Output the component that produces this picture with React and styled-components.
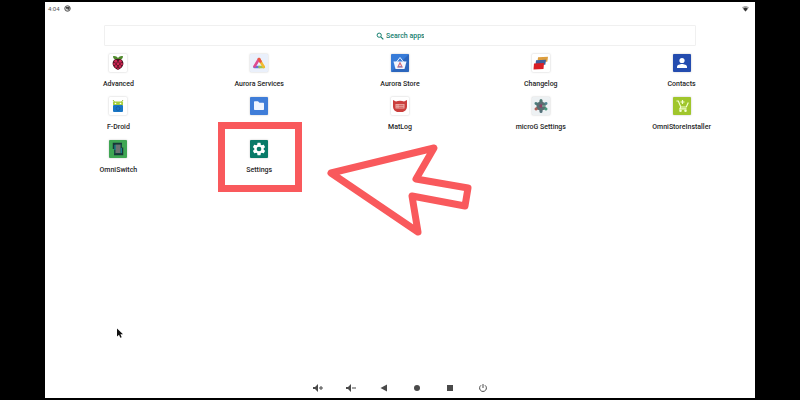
import React from "react";
import styled, { createGlobalStyle } from "styled-components";

const GlobalStyle = createGlobalStyle`
  * { box-sizing: border-box; }
  body { margin: 0; background: #000; font-family: Roboto, "Liberation Sans", sans-serif; }
  button, input { font: inherit; color: inherit; border: 0; padding: 0; background: none; }
`;

const Stage = styled.div`
  display: flex;
  min-height: 100vh;
  padding: 2px 45px;
  background: #000;
`;

const Screen = styled.main`
  position: relative;
  flex: 1;
  display: flex;
  flex-direction: column;
  background: #fff;
  color: #262626;
`;

const StatusBar = styled.header`
  display: flex;
  align-items: center;
  justify-content: space-between;
  height: 12px;
  padding: 0 6px 0 3px;
  font-size: 6px;
  color: #555;
`;

const StatusGroup = styled.div`
  display: flex;
  align-items: center;
  gap: 4px;
`;

const SearchBar = styled.label`
  display: flex;
  align-items: center;
  justify-content: center;
  gap: 2px;
  height: 21px;
  margin: 11px 59px 0;
  border: 1px solid #f0f0f0;
  border-radius: 1px;
  color: #16806f;
  font-size: 7px;
  font-weight: 500;
`;

const SearchInput = styled.input`
  width: 38px;
  height: 10px;
  outline: 0;
  line-height: 10px;
  &::placeholder { color: #16806f; opacity: 1; }
`;

const AppGrid = styled.section`
  display: grid;
  grid-template-columns: repeat(5, 1fr);
  row-gap: 8px;
  padding: 8px 3px 0;
`;

const AppCell = styled.div`
  position: relative;
  display: flex;
  justify-content: center;
`;

const AppButton = styled.button`
  display: flex;
  flex-direction: column;
  align-items: center;
  height: 35px;
  gap: 7px;
  font-size: 7px;
  font-weight: 500;
  line-height: 10px;
  white-space: nowrap;
`;

const AppIcon = styled.svg`
  display: block;
  width: 18px;
  height: 18px;
  flex: none;
  border-radius: 1px;
  background: ${(p) => p.$bg || "#fff"};
  box-shadow: 0 0 2px rgba(0, 0, 0, 0.25);
`;

const Highlight = styled.div`
  position: absolute;
  top: -18px;
  left: 50%;
  width: 84px;
  height: 70px;
  margin-left: -41px;
  border: 7px solid #f9595c;
  pointer-events: none;
`;

const Arrow = styled.svg`
  position: absolute;
  top: 3px;
  left: 50%;
  width: 150px;
  height: 94px;
  margin-left: 66px;
  pointer-events: none;
`;

const Pointer = styled.svg`
  position: absolute;
  left: 71px;
  top: 326px;
  width: 8px;
  height: 11px;
`;

const NavBar = styled.nav`
  display: flex;
  justify-content: center;
  margin-top: auto;
  padding-bottom: 4px;
  color: #4a4a4a;
`;

const NavButton = styled.button`
  display: flex;
  align-items: center;
  justify-content: center;
  width: 33px;
  height: 12px;
`;

const Glyph = styled.svg`
  display: block;
  width: ${(p) => p.$size}px;
  height: ${(p) => p.$size}px;
`;

const GEAR =
  "M19.14 12.94c.04-.3.06-.61.06-.94s-.02-.64-.07-.94l2.03-1.58a.5.5 0 0 0 .12-.61l-1.92-3.32a.5.5 0 0 0-.59-.22l-2.39.96a7 7 0 0 0-1.62-.94l-.36-2.54a.5.5 0 0 0-.48-.41h-3.84a.5.5 0 0 0-.47.41l-.36 2.54c-.59.24-1.13.57-1.62.94l-2.39-.96a.5.5 0 0 0-.59.22L2.74 8.87a.5.5 0 0 0 .12.61l2.03 1.58a6 6 0 0 0 0 1.88l-2.03 1.58a.5.5 0 0 0-.12.61l1.92 3.32c.12.22.37.29.59.22l2.39-.96c.5.38 1.03.7 1.62.94l.36 2.54c.05.24.24.41.48.41h3.84c.24 0 .44-.17.47-.41l.36-2.54a7 7 0 0 0 1.62-.94l2.39.96c.22.08.47 0 .59-.22l1.92-3.32a.5.5 0 0 0-.12-.61zM12 15.6a3.6 3.6 0 1 1 0-7.2 3.6 3.6 0 0 1 0 7.2z";

const Raspberry = () => (
  <>
    <path d="M4 2.2C6 1.700 8 2.500 9 4c1-1.500 3-2.300 5-1.800 0 2.500-1.800 3.800-5 3.800S4 4.700 4 2.200z" fill="#4f8a2c" />
    <path d="M9 5c3.300-.6 5.400 1.500 5.400 4.200 0 3.500-2.700 5.500-5.400 6.600-2.700-1.100-5.400-3.100-5.400-6.600C3.600 6.500 5.700 4.400 9 5z" fill="#4a1220" />
    <g fill="#cf2452">
      <circle cx="6.800" cy="7.200" r="1.500" /><circle cx="11.200" cy="7.200" r="1.500" />
      <circle cx="9" cy="9.700" r="1.500" /><circle cx="5.400" cy="10" r="1.200" />
      <circle cx="12.600" cy="10" r="1.200" /><circle cx="7" cy="12.400" r="1.300" />
      <circle cx="11" cy="12.400" r="1.300" /><circle cx="9" cy="14.500" r=".9" />
    </g>
  </>
);

const AuroraServices = () => (
  <g fill="none" strokeWidth="2.600" strokeLinejoin="round" strokeLinecap="round">
    <path d="M4.500 13h5" stroke="#6076dc" />
    <path d="M9.500 13h4.300" stroke="#9cc652" />
    <path d="M9 5l4.800 8" stroke="#f2ba32" />
    <path d="M9 5L4.500 12.500" stroke="#df4b91" />
    <path d="M9 5l1.500 2.500" stroke="#e95744" />
  </g>
);

const AuroraStore = () => (
  <>
    <path d="M0 18L18 0v18z" fill="#2455a8" opacity=".55" />
    <path d="M5.500 8L9 3.500 12.500 8" fill="none" stroke="#e8f2ff" strokeWidth="1" />
    <path d="M2.500 7.500h13l-2 7.500h-9z" fill="#f2f7ff" />
    <path d="M9 8.800l-2 4h4z" fill="none" stroke="#d96a72" strokeWidth="1.200" />
    <path d="M7 12.800h4" stroke="#777fc4" strokeWidth="1" />
  </>
);

const Changelog = () => (
  <>
    <path d="M6 3.200l10-.5-.7 5H5.500z" fill="#dd9e3e" />
    <path d="M4 6.200l10-.5-.7 5H3.500z" fill="#3d5d9b" />
    <path d="M2 9.500l10-.5-.5 6-10 .4z" fill="#d91e25" />
  </>
);

const Contacts = () => (
  <g fill="#fff">
    <circle cx="9" cy="6.500" r="2.600" />
    <path d="M4 14v-1c0-2 3-2.900 5-2.900s5 .9 5 2.900v1z" />
  </g>
);

const FDroid = () => (
  <>
    <path d="M4 3l1.500 2M14 3l-1.500 2" stroke="#9abf36" strokeWidth="1" />
    <rect x="4" y="4.500" width="10" height="4" rx="1" fill="#a6cf3b" />
    <circle cx="6.500" cy="6.500" r=".8" fill="#fff" /><circle cx="11.500" cy="6.500" r=".8" fill="#fff" />
    <rect x="4" y="8" width="10" height="7" rx="1" fill="#1976c5" />
    <circle cx="9" cy="11.500" r="1.900" fill="none" stroke="#155ca1" strokeWidth=".8" />
  </>
);

const Folder = () => (
  <path d="M4 5.200c0-.7.400-1 1-1h3L9.500 5.700H13c.7 0 1 .4 1 1V12c0 .7-.3 1-1 1H5c-.6 0-1-.3-1-1z" fill="#f1f6ff" />
);

const MatLog = () => (
  <>
    <path d="M2 3l3 1.400c2.300-1 5.700-1 8 0L16 3v6.500c0 3-2.500 5.500-5 5.500H7c-2.500 0-5-2.500-5-5.500z" fill="#cb3f3c" />
    <rect x="4.500" y="7" width="9" height="4.500" fill="#eeb0aa" />
    <path d="M5.500 8.300h1M7.500 8.300h5M5.500 10.200h1M7.500 10.200h5" stroke="#c6413d" strokeWidth=".8" />
  </>
);

const MicroG = () => (
  <>
    <g strokeWidth="3" strokeLinecap="round">
      <path d="M9 3.500V9" stroke="#48776f" /><path d="M9 9l5-2.500" stroke="#4f8690" />
      <path d="M9 9l5 3" stroke="#44997b" /><path d="M9 9v5.500" stroke="#53717a" />
      <path d="M9 9l-5 3" stroke="#af6159" /><path d="M9 9L4 6.500" stroke="#4b7c7c" />
    </g>
    <circle cx="9" cy="9" r="4.500" fill="#586f72" />
    <circle cx="9" cy="9" r="1.700" fill="#8d3f63" />
    <path d="M10 9h3" stroke="#81c7a4" strokeWidth="1" />
  </>
);

const Cart = () => (
  <g fill="none" stroke="#f2ffd0" strokeWidth="1.200">
    <path d="M3.500 4h1.800l2.500 6h5.500l2-4.500M7.800 10l-1 1.800h6.700M9.500 3v4M7.500 5h4" />
    <circle cx="7.500" cy="13.800" r=".7" fill="#fff" /><circle cx="12.500" cy="13.800" r=".7" fill="#fff" />
  </g>
);

const OmniSwitch = () => (
  <>
    <path d="M5 3h8v12H5z" fill="#174b43" />
    <path d="M6.500 4.500h5v8.500h-5z" fill="#6d7172" />
    <path d="M4.500 9V3.500H13M13.500 7.500v7H5" fill="none" stroke="#183638" strokeWidth="1.500" />
    <path d="M6 5v5M12.300 8v5" stroke="#168f9e" strokeWidth="1" />
  </>
);

const Settings = () => (
  <g transform="translate(1.2 1.2) scale(.65)">
    <path d={GEAR} fill="#fff" />
  </g>
);

const apps = [
  { name: "Advanced", Art: Raspberry },
  { name: "Aurora Services", Art: AuroraServices, bg: "#eaf0fb" },
  { name: "Aurora Store", Art: AuroraStore, bg: "#377bd8" },
  { name: "Changelog", Art: Changelog },
  { name: "Contacts", Art: Contacts, bg: "#244caf" },
  { name: "F-Droid", Art: FDroid },
  { name: "Files", Art: Folder, bg: "#3f7dd8", unlabelled: true },
  { name: "MatLog", Art: MatLog },
  { name: "microG Settings", Art: MicroG, bg: "#edf1f3" },
  { name: "OmniStoreInstaller", Art: Cart, bg: "#a0c62c" },
  { name: "OmniSwitch", Art: OmniSwitch, bg: "#3fa653" },
  { name: "Settings", Art: Settings, bg: "#087a68", marked: true },
];

const SPEAKER = "M0 4h2l3-3v8L2 6H0z";

const navItems = [
  { name: "Volume up", art: <path d={`${SPEAKER}M6 4.500h4v1H6zM7.500 3h1v4h-1z`} /> },
  { name: "Volume down", art: <path d={`${SPEAKER}M6 4.500h4v1H6z`} /> },
  { name: "Back", art: <path d="M1.500 5L8 1.500v7z" /> },
  { name: "Home", art: <circle cx="5" cy="5" r="3" /> },
  { name: "Recent apps", art: <path d="M2 2h6v6H2z" /> },
  {
    name: "Power",
    art: <path d="M5 1v4M3 2.300a3.400 3.400 0 1 0 4 0" fill="none" stroke="currentColor" strokeWidth="1" />,
  },
];

export default function App() {
  return (
    <Stage>
      <GlobalStyle />
      <Screen>
        <StatusBar>
          <StatusGroup>
            <span>4:04</span>
            <Glyph $size={7} viewBox="0 0 14 14" aria-hidden="true">
              <circle cx="7" cy="7" r="5.500" fill="#ddd" stroke="#555" strokeWidth="2" />
              <path d="M4 4h7v3.500L7.500 11V7.500H4z" fill="#444" />
            </Glyph>
          </StatusGroup>
          <Glyph $size={7} viewBox="0 0 14 14" aria-label="Wi-Fi">
            <path d="M0 5c4-4 10-4 14 0l-7 8z" fill="#aaa" />
            <path d="M2.500 7.500c3-2.500 6-2.500 9 0L7 13z" fill="#333" />
          </Glyph>
        </StatusBar>

        <SearchBar>
          <Glyph $size={8} viewBox="0 0 8 8" aria-hidden="true">
            <circle cx="3.200" cy="3.200" r="2.100" fill="none" stroke="currentColor" strokeWidth="1" />
            <path d="M4.800 4.800l2.500 2.500" stroke="currentColor" strokeWidth="1.200" />
          </Glyph>
          <SearchInput type="text" placeholder="Search apps" aria-label="Search apps" />
        </SearchBar>

        <AppGrid>
          {apps.map(({ name, Art, bg, unlabelled, marked }) => (
            <AppCell key={name}>
              <AppButton type="button" aria-label={name}>
                <AppIcon viewBox="0 0 18 18" $bg={bg} aria-hidden="true">
                  <Art />
                </AppIcon>
                {!unlabelled && <span>{name}</span>}
              </AppButton>
              {marked && (
                <>
                  <Highlight />
                  <Arrow viewBox="0 0 150 94" aria-hidden="true">
                    <path
                      d="M6 30L109 5 91 36 143 45 140 63 87 53 93 89z"
                      fill="none"
                      stroke="#f9595c"
                      strokeWidth="7"
                      strokeLinejoin="round"
                    />
                  </Arrow>
                </>
              )}
            </AppCell>
          ))}
        </AppGrid>

        <Pointer viewBox="0 0 8 11" aria-hidden="true">
          <path d="M1 .5v8l2-1.700 1.300 3 1.400-.6-1.300-2.900H7z" fill="#111" />
        </Pointer>

        <NavBar>
          {navItems.map(({ name, art }) => (
            <NavButton key={name} type="button" aria-label={name}>
              <Glyph $size={10} viewBox="0 0 10 10" fill="currentColor">
                {art}
              </Glyph>
            </NavButton>
          ))}
        </NavBar>
      </Screen>
    </Stage>
  );
}
